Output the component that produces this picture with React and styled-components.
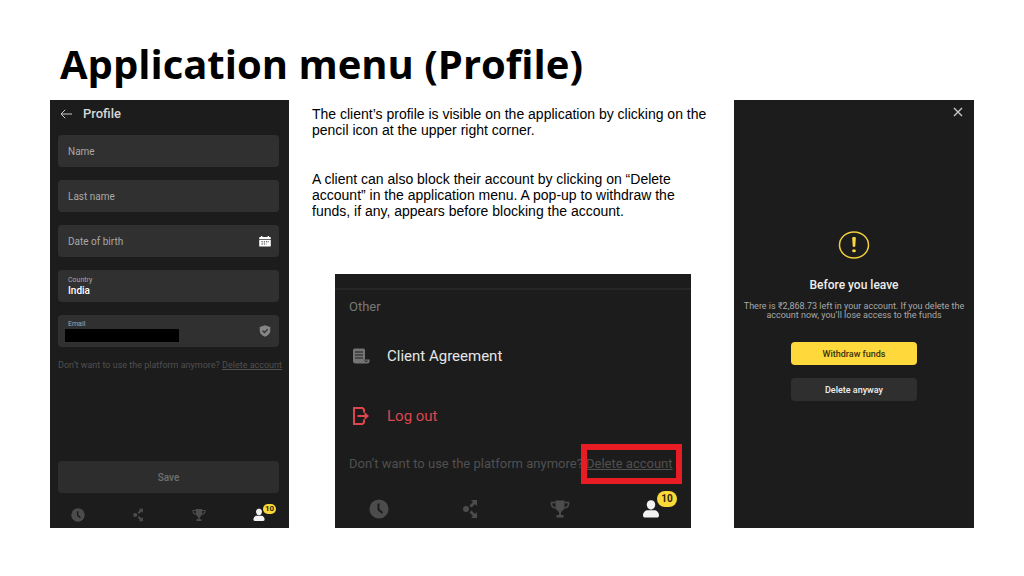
import React from "react";
import styled, { createGlobalStyle } from "styled-components";

const GlobalStyle = createGlobalStyle`
  * {
    box-sizing: border-box;
  }

  body {
    margin: 0;
    background: #ffffff;
    color: #000000;
    font-family: "Liberation Sans", Arial, sans-serif;
  }

  button,
  input {
    font-family: inherit;
  }
`;

const Slide = styled.main`
  padding: 36px 50px 48px;
`;

const Title = styled.h1`
  margin: 0 0 8px 10px;
  font-family: "Open Sans", sans-serif;
  font-size: 40px;
  line-height: 56px;
  font-weight: 700;
`;

const Columns = styled.div`
  display: grid;
  grid-template-columns: minmax(0, 239fr) minmax(0, 399fr) minmax(0, 240fr);
  gap: 23px;
`;

const Screen = styled.section`
  display: flex;
  flex-direction: column;
  min-height: 428px;
  background: #1c1c1c;
  color: #ffffff;
  font-family: Roboto, sans-serif;
`;

const MiddleColumn = styled.div`
  display: flex;
  flex-direction: column;
  justify-content: space-between;
`;

const Copy = styled.div`
  padding-top: 6px;

  p {
    margin: 0 0 33px;
    font-size: 14px;
    line-height: 16px;
  }
`;

/* Profile form */

const ScreenHeader = styled.header`
  display: flex;
  align-items: center;
  gap: 11px;
  padding: 6px 10px 13px;

  h2 {
    margin: 0;
    font-size: 13px;
    line-height: 16px;
    font-weight: 500;
    color: #d6d6d6;
  }
`;

const IconButton = styled.button`
  display: flex;
  padding: 0;
  border: none;
  background: transparent;
  color: #c8c8c8;
`;

const Form = styled.form`
  flex: 1;
  display: flex;
  flex-direction: column;
  gap: 13px;
  padding: 0 10px 0 8px;
`;

const Field = styled.div`
  display: flex;
  align-items: center;
  height: 32px;
  padding: 0 8px 0 10px;
  border-radius: 4px;
  background: #303030;
`;

const FieldBody = styled.div`
  flex: 1;
  display: flex;
  flex-direction: column;
  align-items: flex-start;
`;

const FieldLabel = styled.label`
  font-size: 7px;
  line-height: 9px;
  color: #a8a8a8;
`;

const TextInput = styled.input`
  width: 100%;
  height: 12px;
  padding: 0;
  border: none;
  outline: none;
  background: transparent;
  color: #ffffff;
  font-size: 10px;
  font-weight: ${(props) => (props.$strong ? 500 : 400)};

  &::placeholder {
    color: #a8a8a8;
    opacity: 1;
  }
`;

const HiddenInput = styled(TextInput)`
  width: 114px;
  height: 13px;
  margin-left: -3px;
  background: #000000;
`;

const DeleteHint = styled.p`
  margin: 0;
  font-size: ${(props) => (props.$large ? "13px" : "9px")};
  line-height: ${(props) => (props.$large ? "16px" : "10px")};
  color: #505050;
  white-space: nowrap;
`;

const DeleteLink = styled.a`
  color: inherit;
  text-decoration: underline;
`;

const SaveButton = styled.button`
  height: 32px;
  margin-top: auto;
  border: none;
  border-radius: 4px;
  background: #2d2d2d;
  color: #707070;
  font-size: 10px;
  font-weight: 500;
`;

/* Bottom navigation */

const Nav = styled.nav`
  display: flex;
  justify-content: space-between;
  align-items: center;
  margin-top: auto;
  padding: ${(props) => (props.$large ? "16px 30px 9px 34px" : "15px 23px 6px 21px")};
`;

const NavItem = styled.button`
  position: relative;
  display: flex;
  padding: 0;
  border: none;
  background: transparent;
  color: ${(props) => (props.$active ? "#f2f2f2" : "#4c4c4c")};
`;

const Badge = styled.span`
  position: absolute;
  left: ${(props) => (props.$large ? "16px" : "11px")};
  top: ${(props) => (props.$large ? "-8px" : "-4px")};
  width: ${(props) => (props.$large ? "20px" : "13px")};
  border-radius: 8px;
  background: #fbd938;
  color: #2b2508;
  font-size: ${(props) => (props.$large ? "10px" : "8px")};
  line-height: ${(props) => (props.$large ? "16px" : "10px")};
  font-weight: 700;
  text-align: center;
`;

/* Application menu */

const Menu = styled(Screen)`
  min-height: 254px;
  margin: 0 20px 0 23px;
`;

const MenuBody = styled.div`
  margin-top: 14px;
  padding: 9px 14px 0;
  border-top: 2px solid #262626;

  h3 {
    margin: 0 0 29px;
    font-size: 13px;
    line-height: 16px;
    font-weight: 400;
    color: #787878;
  }
`;

const MenuItem = styled.button`
  display: flex;
  align-items: center;
  gap: 14px;
  margin-bottom: ${(props) => props.$space};
  padding: 0;
  border: none;
  background: transparent;
  color: ${(props) => (props.$danger ? "#dc4650" : "#e6e6e6")};
  font-size: 15px;
  line-height: 24px;
`;

const MarkedLink = styled(DeleteLink)`
  position: relative;

  &::after {
    content: "";
    position: absolute;
    inset: -12px -9px -13px -5px;
    border: 6px solid #e81c24;
  }
`;

/* Leave dialog */

const DialogTop = styled.div`
  display: flex;
  justify-content: flex-end;
  padding: 7px 11px 0;
`;

const Dialog = styled.div`
  display: flex;
  flex-direction: column;
  align-items: center;
  padding: 114px 8px 0;
  text-align: center;

  h2 {
    margin: 18px 0 9px;
    font-size: 12px;
    line-height: 16px;
    font-weight: 500;
    color: #eeeeee;
  }

  p {
    margin: 0 0 22px;
    font-size: 9px;
    line-height: 9px;
    color: #a8a8a8;
  }
`;

const DialogButton = styled.button`
  width: 56%;
  height: 23px;
  margin-bottom: 13px;
  padding: 0;
  border: none;
  border-radius: 4px;
  background: ${(props) => (props.$primary ? "#ffd93b" : "#2f2f2f")};
  color: ${(props) => (props.$primary ? "#3a3110" : "#f0f0f0")};
  font-size: 9px;
  font-weight: 500;
`;

const BackIcon = () => (
  <svg width="12" height="10" viewBox="0 0 12 10" fill="none" stroke="currentColor">
    <path d="M12 5H1M5.2 0.8L1 5l4.2 4.2" />
  </svg>
);

const CloseIcon = () => (
  <svg width="10" height="10" viewBox="0 0 10 10" fill="none" stroke="currentColor" strokeWidth="1.4">
    <path d="M1 1l8 8M9 1L1 9" />
  </svg>
);

const CalendarIcon = () => (
  <svg width="12" height="11" viewBox="0 0 12 11">
    <path fill="#fff" d="M1 1h1V0h1.4v1h5.2V0H10v1h1a.8.8 0 0 1 .8.8V3H.2V1.800A.8.8 0 0 1 1 1z" />
    <path fill="#fff" d="M.2 3.700h11.600v6a.9.9 0 0 1-.9.9H1.100a.9.9 0 0 1-.9-.9z" />
    <path stroke="#303030" strokeDasharray="1.300 1" d="M2.500 5.800h7.500M2.500 8h5" />
  </svg>
);

const ShieldIcon = () => (
  <svg width="12" height="12" viewBox="0 0 12 12">
    <path fill="#858585" d="M6 .3l5.300 1.700v3.700c0 2.700-2.200 4.800-5.300 6C2.900 10.500.7 8.400.7 5.700V2z" />
    <path fill="none" stroke="#303030" strokeWidth="1.300" d="M3.500 5.600l2 1.900 3.200-3.400" />
  </svg>
);

const ScrollIcon = () => (
  <svg width="24" height="24" viewBox="0 0 24 24">
    <path
      fill="#747474"
      d="M5.500 4.500h9a1.500 1.500 0 0 1 1.500 1.500v9.500h4.500v1.500a2.500 2.500 0 0 1-2.500 2.500H6.500a2.500 2.500 0 0 1-2.500-2.500V6a1.500 1.500 0 0 1 1.500-1.500z"
    />
    <path stroke="#1c1c1c" d="M6 8h8M6 11h8M6 14h8" />
    <path fill="none" stroke="#1c1c1c" strokeWidth="0.800" d="M16 15.500v1a1.200 1.200 0 0 0 2.400 0" />
  </svg>
);

const LogoutIcon = () => (
  <svg width="24" height="24" viewBox="0 0 24 24" fill="none" stroke="currentColor" strokeWidth="2">
    <path d="M15 8.500V5.500L13.500 4H5v16h8.500l1.500-1.500V15.500" />
    <path d="M8.500 12H17" />
    <path fill="currentColor" stroke="none" d="M15.500 8l4.500 4-4.500 4z" />
  </svg>
);

const ClockIcon = ({ size }) => (
  <svg width={size} height={size} viewBox="0 0 20 20">
    <circle cx="10" cy="10" r="9.600" fill="currentColor" />
    <path fill="none" stroke="#1c1c1c" strokeWidth="2" d="M9.500 4.500v6l4 3.500" />
  </svg>
);

const ShareIcon = ({ size }) => (
  <svg width={size} height={size} viewBox="0 0 20 20" fill="currentColor">
    <circle cx="6" cy="10" r="3" />
    <path d="M11 1h6v6l-2-2-3.500 3.600-2-2L13 3zM11 19h6v-6l-2 2-3.500-3.600-2 2L13 17z" />
  </svg>
);

const TrophyIcon = ({ size }) => (
  <svg width={size} height={size} viewBox="0 0 20 20">
    <path fill="currentColor" d="M5.500 1.500h9V7c0 3-1.500 5-3.500 5.700v3.300h2.500v2.500h-7V16H9v-3.300C7 12 5.500 10 5.500 7z" />
    <path
      fill="none"
      stroke="currentColor"
      strokeWidth="1.500"
      d="M5.500 3.500H1.500V5c0 2 1.500 3.700 4.500 4M14.500 3.500h4V5c0 2-1.500 3.700-4.500 4"
    />
  </svg>
);

const PersonIcon = ({ size }) => (
  <svg width={size} height={size} viewBox="0 0 20 20" fill="currentColor">
    <path d="M10 1.200c2.600 0 4.200 1.800 4.200 4.300S12.600 10.500 10 10.500 5.800 8 5.800 5.500 7.400 1.200 10 1.200z" />
    <path d="M6.500 11.200h7c2.600 0 4.500 2.600 4.500 5.400 0 1.400-1 2-2 2H4c-1 0-2-.6-2-2 0-2.800 1.900-5.400 4.500-5.400z" />
  </svg>
);

const WarningIcon = () => (
  <svg width="32" height="28" viewBox="0 0 32 28">
    <ellipse cx="16" cy="14" rx="14.500" ry="13" fill="none" stroke="#f0cf3c" strokeWidth="1.500" />
    <path fill="#f5d742" d="M14.200 7q0-1 1-1h1.600q1 0 1 1l-.5 8q-.1 1-1.300 1t-1.300-1z" />
    <ellipse cx="16" cy="19.700" rx="1.900" ry="1.500" fill="#f5d742" />
  </svg>
);

const BottomNav = ({ large }) => {
  const size = large ? 20 : 14;
  return (
    <Nav $large={large}>
      <NavItem type="button" aria-label="Trades">
        <ClockIcon size={size} />
      </NavItem>
      <NavItem type="button" aria-label="Share">
        <ShareIcon size={size} />
      </NavItem>
      <NavItem type="button" aria-label="Rewards">
        <TrophyIcon size={size} />
      </NavItem>
      <NavItem type="button" aria-label="Account" $active>
        <PersonIcon size={size} />
        <Badge $large={large}>10</Badge>
      </NavItem>
    </Nav>
  );
};

const ProfileScreen = () => (
  <Screen>
    <ScreenHeader>
      <IconButton type="button" aria-label="Back">
        <BackIcon />
      </IconButton>
      <h2>Profile</h2>
    </ScreenHeader>
    <Form onSubmit={(event) => event.preventDefault()}>
      <Field>
        <TextInput type="text" aria-label="Name" placeholder="Name" />
      </Field>
      <Field>
        <TextInput type="text" aria-label="Last name" placeholder="Last name" />
      </Field>
      <Field>
        <TextInput type="text" aria-label="Date of birth" placeholder="Date of birth" />
        <IconButton type="button" aria-label="Pick a date">
          <CalendarIcon />
        </IconButton>
      </Field>
      <Field>
        <FieldBody>
          <FieldLabel htmlFor="country">Country</FieldLabel>
          <TextInput id="country" type="text" defaultValue="India" $strong />
        </FieldBody>
      </Field>
      <Field>
        <FieldBody>
          <FieldLabel htmlFor="email">Email</FieldLabel>
          <HiddenInput id="email" type="email" />
        </FieldBody>
        <ShieldIcon />
      </Field>
      <DeleteHint>
        Don’t want to use the platform anymore? <DeleteLink href="#delete">Delete account</DeleteLink>
      </DeleteHint>
      <SaveButton type="submit">Save</SaveButton>
    </Form>
    <BottomNav />
  </Screen>
);

const AppMenu = () => (
  <Menu>
    <MenuBody>
      <h3>Other</h3>
      <MenuItem type="button" $space="36px">
        <ScrollIcon />
        Client Agreement
      </MenuItem>
      <MenuItem type="button" $space="28px" $danger>
        <LogoutIcon />
        Log out
      </MenuItem>
      <DeleteHint $large>
        Don’t want to use the platform anymore? <MarkedLink href="#delete">Delete account</MarkedLink>
      </DeleteHint>
    </MenuBody>
    <BottomNav large />
  </Menu>
);

const LeaveScreen = () => (
  <Screen>
    <DialogTop>
      <IconButton type="button" aria-label="Close">
        <CloseIcon />
      </IconButton>
    </DialogTop>
    <Dialog>
      <WarningIcon />
      <h2>Before you leave</h2>
      <p>
        There is ₹2,868.73 left in your account. If you delete the account now, you’ll lose access to the funds
      </p>
      <DialogButton type="button" $primary>
        Withdraw funds
      </DialogButton>
      <DialogButton type="button">Delete anyway</DialogButton>
    </Dialog>
  </Screen>
);

const App = () => (
  <>
    <GlobalStyle />
    <Slide>
      <Title>Application menu (Profile)</Title>
      <Columns>
        <ProfileScreen />
        <MiddleColumn>
          <Copy>
            <p>
              The client’s profile is visible on the application by clicking on the pencil icon at the upper right
              corner.
            </p>
            <p>
              A client can also block their account by clicking on “Delete account” in the application menu. A pop-up
              to withdraw the funds, if any, appears before blocking the account.
            </p>
          </Copy>
          <AppMenu />
        </MiddleColumn>
        <LeaveScreen />
      </Columns>
    </Slide>
  </>
);

export default App;
